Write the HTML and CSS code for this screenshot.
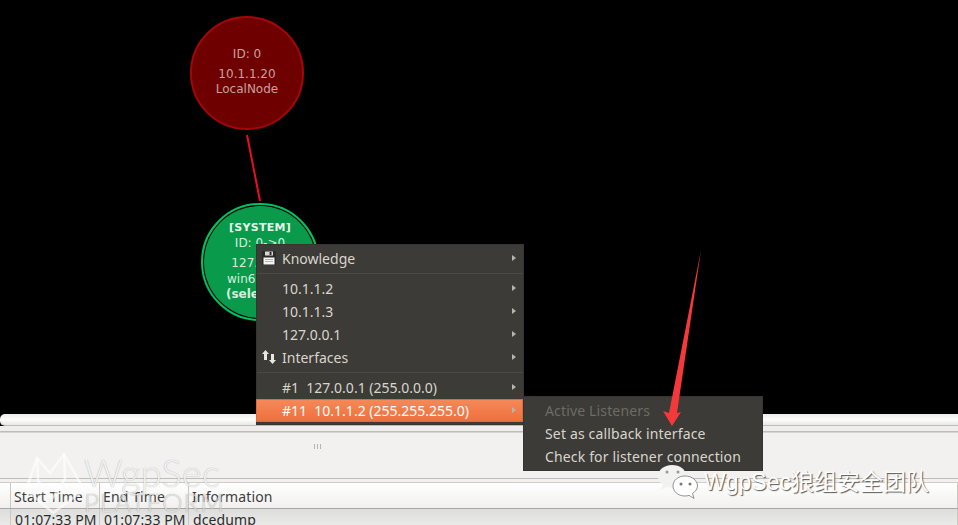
FILE: index.html
```html
<!DOCTYPE html>
<html lang="en">
<head>
    <meta charset="UTF-8">
    <title>Armitage</title>
    <link rel="stylesheet" href="styles.css">
</head>
<body>
    <!-- Graph view -->
    <div class="graph">
        <svg class="graph-link" width="958" height="413" viewBox="0 0 958 413">
            <line x1="247" y1="135" x2="260" y2="201" stroke="#e8101c" stroke-width="2"></line>
        </svg>
        <div class="node node-red">
            <span class="node-id">ID: 0</span>
            <span>10.1.1.20</span>
            <span>LocalNode</span>
        </div>
        <div class="node node-green">
            <div class="node-inner">
                <b class="node-user">[SYSTEM]</b>
                <span class="node-pivot">ID: 0-&gt;0</span>
                <span class="node-ip">127.0.0.1</span>
                <span class="node-os">win6.1 x64</span>
                <b>(selected)</b>
            </div>
        </div>
    </div>

    <div class="hscroll"><div class="hscroll-thumb"></div></div>
    <div class="split-top"></div>
    <div class="split">
        <div class="split-grip"></div>
    </div>

    <!-- Sessions table -->
    <div class="table-wrap">
        <div class="row row-head">
            <div class="cell cell-first"></div>
            <div class="cell">Start Time</div>
            <div class="cell">End Time</div>
            <div class="cell">Information</div>
        </div>
        <div class="row row-body">
            <div class="cell cell-first"></div>
            <div class="cell">01:07:33 PM</div>
            <div class="cell">01:07:33 PM</div>
            <div class="cell">dcedump</div>
        </div>
    </div>

    <!-- Context menu -->
    <div class="menu menu-main">
        <div class="menu-item">
            <svg class="menu-icon" width="16" height="16" viewBox="0 0 16 16">
                <path d="M1 1h13l1 1v13H1z" fill="#2b2a27"></path>
                <rect x="4" y="1.500" width="8" height="4" fill="#d8d8d4"></rect>
                <rect x="8.500" y="2" width="2" height="3" fill="#2b2a27"></rect>
                <rect x="2.500" y="7.500" width="11" height="7" fill="#f4f4f2"></rect>
                <path d="M4 9.500h8M4 11.500h8" stroke="#b5b5b0"></path>
            </svg>
            <span>Knowledge</span><i class="arrow"></i>
        </div>
        <div class="menu-sep"></div>
        <div class="menu-item"><span>10.1.1.2</span><i class="arrow"></i></div>
        <div class="menu-item"><span>10.1.1.3</span><i class="arrow"></i></div>
        <div class="menu-item"><span>127.0.0.1</span><i class="arrow"></i></div>
        <div class="menu-item">
            <svg class="menu-icon" width="16" height="16" viewBox="0 0 16 16">
                <path d="M4.500 1 8 5H6v6H3V5H1z" fill="#e6e6e2"></path>
                <path d="M11.500 15 8 11h2V5h3v6h2z" fill="#e6e6e2"></path>
            </svg>
            <span>Interfaces</span><i class="arrow"></i>
        </div>
        <div class="menu-sep"></div>
        <div class="menu-item"><span>#1&nbsp; 127.0.0.1 (255.0.0.0)</span><i class="arrow"></i></div>
        <div class="menu-item menu-active"><span>#11&nbsp; 10.1.1.2 (255.255.255.0)</span><i class="arrow"></i></div>
    </div>

    <div class="menu menu-sub">
        <div class="menu-item menu-disabled"><span>Active Listeners</span></div>
        <div class="menu-item"><span>Set as callback interface</span></div>
        <div class="menu-item"><span>Check for listener connection</span></div>
    </div>

    <!-- Annotation arrow -->
    <svg class="red-arrow" width="50" height="185" viewBox="0 0 50 185">
        <path d="M41 0 17 163 21 162 12 176 3 161 9 163Z" fill="#f5393b"></path>
    </svg>

    <!-- Watermarks -->
    <svg class="fox" width="62" height="62" viewBox="0 0 62 62" fill="none" stroke="#fff" stroke-opacity=".6" stroke-width="2.500">
        <path d="M12 5 25 20 39 1 59 37 28 60 1 37Z" fill="#fff" fill-opacity=".12"></path>
        <path d="M12 5 13 28 27 46 40 26 39 1"></path>
    </svg>
    <div class="mark-left">
        <div class="mark-name">WgpSec</div>
        <div class="mark-sub">PLATFORM</div>
    </div>
    <svg class="wechat" width="42" height="36" viewBox="0 0 42 36">
        <path d="M15 1C7 1 1 6 1 12c0 4 2 7 5 9l-2 5 6-3c2 .6 3 .7 5 .7 8 0 14-5 14-11.700S23 1 15 1z" fill="#f2f2f0"></path>
        <path d="M28 12c-7 0-12 4.500-12 10s5 10 12 10c1.500 0 2.500-.2 4-.6l5 3-1.500-5c3-2 5-4.500 5-7.400 0-5.500-5.500-10-12.500-10z" fill="#fff" stroke="#777" stroke-width=".8"></path>
        <circle cx="10" cy="8" r="1.500" fill="#999"></circle>
        <circle cx="21" cy="8" r="1.500" fill="#999"></circle>
        <circle cx="24" cy="20" r="1.500" fill="#777"></circle>
        <circle cx="33" cy="20" r="1.500" fill="#777"></circle>
    </svg>
    <div class="mark-right">WgpSec狼组安全团队</div>
</body>
</html>
```

FILE: styles.css
```css
* {
    box-sizing: border-box;
}

body {
    margin: 0;
    width: 958px;
    height: 525px;
    overflow: hidden;
    position: relative;
    background: #f2f1f0;
    font-family: "Noto Sans", "Open Sans", sans-serif;
    display: flex;
    flex-direction: column;
}

/* graph */
.graph {
    position: relative;
    height: 413px;
    flex: none;
    background: #000;
}

.graph-link {
    position: absolute;
    left: 0;
    top: 0;
}

.node {
    position: absolute;
    border-radius: 50%;
    font-family: "DejaVu Sans", sans-serif;
    font-size: 12px;
    display: flex;
    flex-direction: column;
    align-items: center;
    text-align: center;
}

.node span,
.node b {
    line-height: 15px;
    white-space: nowrap;
}

.node-red {
    left: 190px;
    top: 16px;
    width: 114px;
    height: 114px;
    padding-top: 29px;
    background: #6e0000;
    border: 2px solid #a50606;
    color: #c9a0a0;
}

.node-red .node-id {
    margin-bottom: 5px;
}

.node-green {
    left: 201px;
    top: 203px;
    width: 118px;
    height: 118px;
    border: 2px solid #00c261;
    padding: 1px;
    background: #000;
    color: #d6eedd;
}

.node-inner {
    width: 100%;
    height: 100%;
    border-radius: 50%;
    background: #0a9a4b;
    padding-top: 14px;
    display: flex;
    flex-direction: column;
    align-items: center;
}

.node-user {
    font-size: 11px;
    color: #e8f5ec;
    letter-spacing: .3px;
}

.node-pivot {
    margin-top: 1px;
}

.node-ip {
    margin-top: 5px;
}

.node-os {
    margin-top: 1px;
}

/* strips below graph */
.hscroll {
    height: 13px;
    flex: none;
    padding-top: 1px;
    background: #000;
}

.hscroll-thumb {
    height: 12px;
    border-radius: 5px 0 0 5px;
    background: linear-gradient(#efeeec, #fdfdfd 50%, #e9e8e6);
    border-bottom: 1px solid #bdbcb7;
}

.split-top {
    flex: none;
    height: 6px;
    background: #efeeec;
    border-bottom: 1px solid #bebdb7;
}

.split {
    position: relative;
    flex: none;
    height: 47px;
    border-top: 1px solid #d6d5d0;
    background: #f2f1f0;
    border-bottom: 1px solid #bebdb7;
}

.split-grip {
    position: absolute;
    left: 314px;
    top: 11px;
    width: 7px;
    height: 5px;
    background: repeating-linear-gradient(90deg, #b5b4ae 0 1px, transparent 1px 3px);
}

/* table */
.table-wrap {
    flex: 1;
    padding-top: 3px;
    background: #f2f1f0;
    font-size: 14px;
    letter-spacing: .12px;
}

.row {
    display: grid;
    grid-template-columns: 11px 89px 89px 1fr;
}

.row-head {
    height: 27px;
    line-height: 27px;
    color: #3c3c3c;
    background: linear-gradient(#fff, #f1f0ee);
    border-top: 1px solid #cfcec9;
    border-bottom: 1px solid #a9a8a3;
}

.row-body {
    height: 16px;
    line-height: 21px;
    color: #2b2b2b;
    background: linear-gradient(#dddddb, #eaeae8);
}

.cell {
    padding-left: 3px;
    border-right: 1px solid #c9c8c3;
    white-space: nowrap;
    overflow: hidden;
}

.row-body .cell {
    padding-left: 4px;
}

.cell-first {
    padding: 0;
}

/* menus */
.menu {
    position: absolute;
    background: #3c3b37;
    color: #d9d5cc;
    font-size: 14px;
    border: 1px solid #353430;
}

.menu-main {
    left: 256px;
    top: 244px;
    width: 268px;
    height: 181px;
    padding-top: 2px;
}

.menu-sub {
    left: 523px;
    top: 396px;
    width: 240px;
    height: 75px;
    padding-top: 2px;
    letter-spacing: .15px;
}

.menu-item {
    position: relative;
    height: 23px;
    line-height: 23px;
    padding-left: 25px;
    white-space: nowrap;
}

.menu-sub .menu-item {
    padding-left: 21px;
}

.menu-icon {
    position: absolute;
    left: 4px;
    top: 3px;
}

.menu-sep {
    height: 7px;
    position: relative;
}

.menu-sep::after {
    content: "";
    position: absolute;
    left: 0;
    right: 0;
    top: 3px;
    height: 1px;
    background: #4a4945;
}

.menu-active {
    margin-left: -1px;
    padding-left: 26px;
    color: #fff;
    background: linear-gradient(#f58a5a, #ee6f3c);
    box-shadow: inset 0 0 0 1px #dd6a3a;
}

.menu-disabled {
    color: #6e6c64;
}

.arrow {
    position: absolute;
    right: 7px;
    top: 8px;
    width: 0;
    height: 0;
    border-left: 4px solid #b8b5ac;
    border-top: 3.500px solid transparent;
    border-bottom: 3.500px solid transparent;
}

.red-arrow {
    position: absolute;
    left: 660px;
    top: 250px;
}

/* watermarks */
.fox {
    position: absolute;
    left: 25px;
    top: 453px;
}

.mark-left {
    position: absolute;
    left: 84px;
    top: 453px;
    font-family: "Lato", sans-serif;
    font-weight: 300;
}

.mark-name {
    font-size: 38px;
    line-height: 38px;
    letter-spacing: .3px;
    color: rgba(255, 255, 255, .85);
    text-shadow: 0 0 1px rgba(100, 100, 100, .6);
}

.mark-sub {
    font-size: 26px;
    line-height: 22px;
    letter-spacing: 1px;
    color: rgba(255, 255, 255, .7);
    text-shadow: 0 0 1px rgba(80, 80, 80, .6);
}

.wechat {
    position: absolute;
    left: 657px;
    top: 464px;
}

.mark-right {
    position: absolute;
    left: 704px;
    top: 467px;
    font-family: "Liberation Sans", "Noto Sans CJK SC", sans-serif;
    font-size: 23px;
    line-height: 30px;
    color: #fff;
    text-shadow: 1px 1px 1px #555;
    white-space: nowrap;
}
```
